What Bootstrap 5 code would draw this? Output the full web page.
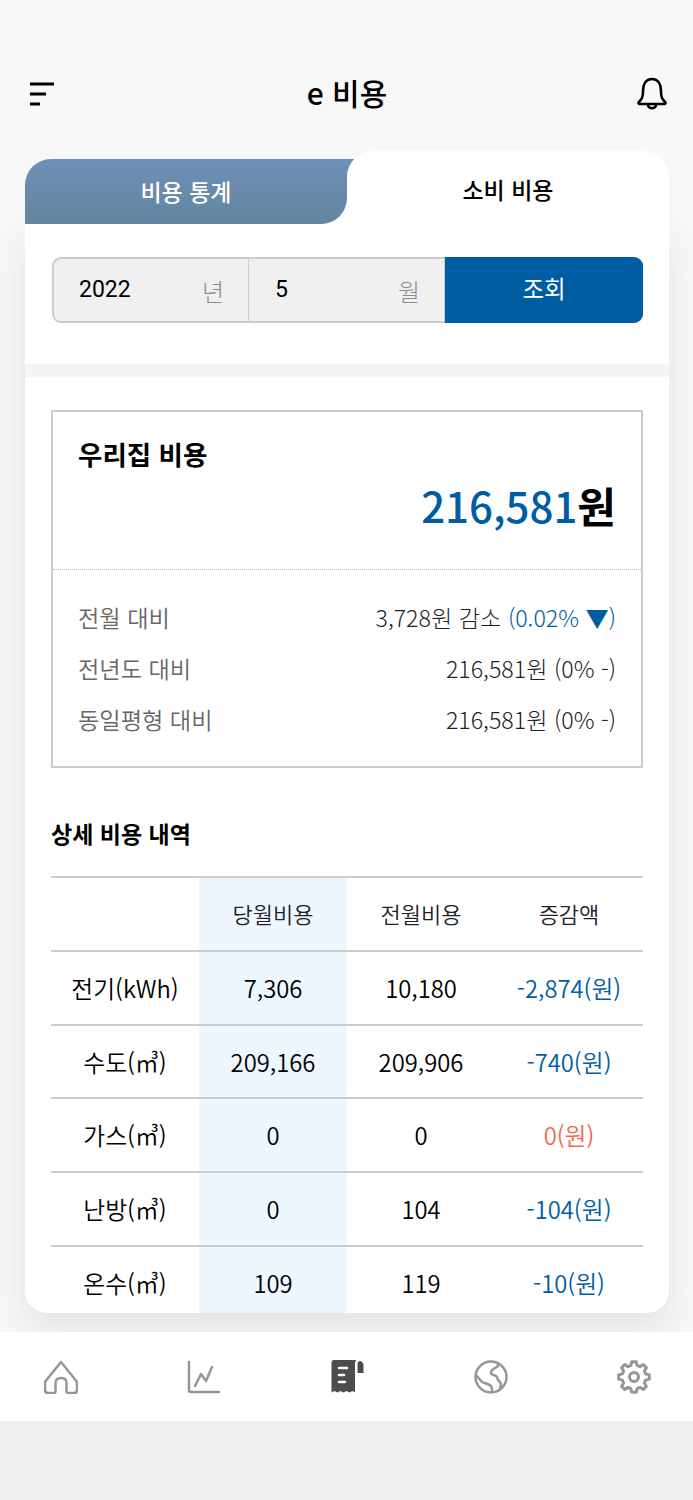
<!DOCTYPE html>
<html lang="ko">
<head>
    <meta charset="UTF-8">
    <meta name="viewport" content="width=device-width, initial-scale=1.0">
    <title>e 비용</title>

    <link href="https://cdn.jsdelivr.net/npm/bootstrap@5.3.0/dist/css/bootstrap.min.css" rel="stylesheet">

    <style>
        body {
            background: #f8f8f8;
            font-family: "Noto Sans CJK KR", sans-serif;
            color: #000;
            height: 1500px;
            overflow: hidden;
        }

        .top-bar { height: 151px; padding: 0 26px 0 30px; }
        .top-title { font-size: 30px; font-weight: 500; line-height: 1; margin: 32px 0 0 3px; }
        .top-bar svg { margin-top: 36px; }

        .cost-wrap { margin: 0 24px 0 25px; height: 1162px; }

        .tab-row { isolation: isolate; }
        .tab-slot { flex: 0 0 50%; }
        .tab-slot-off { padding-top: 8px; background: linear-gradient(transparent 50%, #fff 50%); }
        .tab-off {
            height: 65px;
            background: linear-gradient(#6e90b6, #64859f);
            color: #fff;
            font-size: 23px;
            font-weight: 500;
            border-radius: 26px 0 26px 0;
        }
        .tab-on {
            position: relative;
            height: 73px;
            background: #fff;
            font-size: 23px;
            font-weight: 500;
            border-radius: 26px 26px 0 0;
            padding-top: 3px;
        }
        .tab-on::before {
            content: "";
            position: absolute;
            left: 0;
            top: 8px;
            width: 26px;
            height: 26px;
            background: #6e90b6;
            z-index: -1;
        }

        .cost-body {
            height: 1089px;
            background: #fff;
            border-radius: 0 0 22px 22px;
            overflow: hidden;
            box-shadow: 0 18px 40px rgba(0, 0, 0, .09);
        }

        .search-area { padding: 33px 26px 0 27px; border-bottom: 13px solid #f5f5f5; box-sizing: content-box; height: 107px; }
        .search-box { height: 66px; border: 2px solid #ccc; border-radius: 9px; background: #f0f0f0; }
        .search-cell { flex: 0 0 195px; padding: 1px 24px 0 25px; border-right: 1px solid #ccc; font-family: Roboto, sans-serif; font-size: 23px; }
        .search-cell + .search-cell { flex-basis: 196px; padding-left: 26px; }
        .search-cell span:last-child { color: #8c8c8c; font-family: "Noto Sans CJK KR", sans-serif; font-size: 24px; font-weight: 300; }
        .search-btn {
            flex: 1;
            margin: -2px -2px -2px 0;
            background: #005ca3;
            color: #fff;
            border: 0;
            border-radius: 0 9px 9px 0;
            font-size: 23.5px;
            line-height: 1;
            padding: 0 0 3px;
        }
        .search-btn:hover { background: #005ca3; color: #fff; }

        .detail-area { padding: 33px 26px 0; }
        .sum-box { height: 358px; border: 2px solid #ccc; }
        .sum-head { height: 158px; padding: 23px 25px 0 25px; border-bottom: 1px dotted #bbb; }
        .sum-title { font-size: 26.5px; font-weight: 700; line-height: 38px; margin: 0; }
        .sum-total { font-size: 42px; font-weight: 700; line-height: 60px; margin-top: 2px; }
        .sum-total b { color: #005ca3; font-weight: 500; }
        .sum-rows { padding: 22px 25px 0 25px; }
        .sum-row { height: 51px; font-size: 23.2px; font-weight: 300; color: #222; }
        .sum-label { color: #666; font-weight: 350; }
        .txt-down { color: #005ca3; }

        .sub-title { font-size: 23px; font-weight: 700; line-height: 34px; margin: 48px 0 26px; }

        .cost-table { table-layout: fixed; margin: 0; border-top: 2px solid #ccc; }
        .cost-table th, .cost-table td {
            height: 73.75px;
            padding: 0;
            text-align: center;
            vertical-align: middle;
            font-size: 23.8px;
            font-weight: 350;
            border-bottom: 2px solid #ccc;
            color: #000;
        }
        .cost-table th { font-size: 22px; font-weight: 350; color: #222; }
        .cost-table .col-now { background: #eef7ff; }
        .cost-table .val-down { color: #005ca3; }
        .cost-table .val-zero { color: #f4664f; }

        .bottom-nav { height: 89px; margin-top: 19px; background: #fff; padding: 0 42px 0 44px; }
        .bottom-fill { height: 79px; background: #f0f0f0; }
    </style>
</head>
<body>

    <div class="top-bar d-flex justify-content-between align-items-center">
        <svg width="24" height="24" viewBox="0 0 24 24" fill="none" stroke="#000" stroke-width="3">
            <path d="M0 2h24M0 12h16M0 22h10"/>
        </svg>
        <div class="top-title">e 비용</div>
        <svg width="30" height="33" viewBox="0 0 30 33" fill="none" stroke="#000" stroke-width="2.600" stroke-linejoin="round">
            <path d="M2 25c3-3 4-5 4-11C6 7 9 2 15 2s9 5 9 12c0 6 1 8 4 11 1 1 .5 2-1 2H3c-1.500 0-2-1-1-2z"/>
            <path d="M11 27.500c0 5 8 5 8 0"/>
        </svg>
    </div>

    <div class="cost-wrap">
        <div class="tab-row d-flex align-items-start">
            <div class="tab-slot tab-slot-off">
                <div class="tab-off d-flex align-items-center justify-content-center">비용 통계</div>
            </div>
            <div class="tab-slot tab-on d-flex align-items-center justify-content-center">소비 비용</div>
        </div>

        <div class="cost-body">
            <div class="search-area">
                <div class="search-box d-flex align-items-stretch">
                    <div class="search-cell d-flex justify-content-between align-items-center"><span>2022</span><span>년</span></div>
                    <div class="search-cell d-flex justify-content-between align-items-center"><span>5</span><span>월</span></div>
                    <button type="button" class="btn search-btn">조회</button>
                </div>
            </div>

            <div class="detail-area">
                <div class="sum-box">
                    <div class="sum-head">
                        <h2 class="sum-title">우리집 비용</h2>
                        <div class="sum-total text-end"><b>216,581</b>원</div>
                    </div>
                    <div class="sum-rows">
                        <div class="sum-row d-flex justify-content-between align-items-center">
                            <span class="sum-label">전월 대비</span>
                            <span>3,728원 감소 <span class="txt-down">(0.02% ▼)</span></span>
                        </div>
                        <div class="sum-row d-flex justify-content-between align-items-center">
                            <span class="sum-label">전년도 대비</span>
                            <span>216,581원 (0% -)</span>
                        </div>
                        <div class="sum-row d-flex justify-content-between align-items-center">
                            <span class="sum-label">동일평형 대비</span>
                            <span>216,581원 (0% -)</span>
                        </div>
                    </div>
                </div>

                <h3 class="sub-title">상세 비용 내역</h3>

                <table class="table cost-table">
                    <thead>
                        <tr><th></th><th class="col-now">당월비용</th><th>전월비용</th><th>증감액</th></tr>
                    </thead>
                    <tbody>
                        <tr><td>전기(kWh)</td><td class="col-now">7,306</td><td>10,180</td><td class="val-down">-2,874(원)</td></tr>
                        <tr><td>수도(㎥)</td><td class="col-now">209,166</td><td>209,906</td><td class="val-down">-740(원)</td></tr>
                        <tr><td>가스(㎥)</td><td class="col-now">0</td><td>0</td><td class="val-zero">0(원)</td></tr>
                        <tr><td>난방(㎥)</td><td class="col-now">0</td><td>104</td><td class="val-down">-104(원)</td></tr>
                        <tr><td>온수(㎥)</td><td class="col-now">109</td><td>119</td><td class="val-down">-10(원)</td></tr>
                    </tbody>
                </table>
            </div>
        </div>
    </div>

    <nav class="bottom-nav d-flex justify-content-between align-items-center">
        <svg width="34" height="34" viewBox="0 0 34 34" fill="none" stroke="#969696" stroke-width="2.500" stroke-linejoin="round">
            <path d="M17 2L2.500 20c-1 1-1.500 2-1.500 3v7c0 2 1 3 3 3h6c1 0 1.500-.5 1.500-1.500V23c0-3 2-5 5.500-5s5.500 2 5.500 5v8.500c0 1 .5 1.500 1.500 1.500h6c2 0 3-1 3-3v-7c0-1-.5-2-1.500-3z"/>
        </svg>
        <svg width="34" height="34" viewBox="0 0 34 34" fill="none" stroke="#969696" stroke-width="2.500" stroke-linecap="round" stroke-linejoin="round">
            <path d="M2 2v28c0 1.500 .5 2 2 2h28"/>
            <path d="M8 26l6-12 5 7 6-14"/>
        </svg>
        <svg width="34" height="34" viewBox="1.500 0 34 34">
            <path fill="#4d4d4d" d="M4 0h23c-1 1-1.500 2-1.500 4v28.500l-2.500-1.500-3 1.500-3-1.500-3 1.500-3-1.500-3 1.500-3-1.500-3 1.500V3c0-2 1-3 2.500-3z"/>
            <path fill="#4d4d4d" d="M28 13V4c0-2 1-3 2.500-3S34 3 34 5v8z"/>
            <path stroke="#fff" stroke-width="2.500" stroke-linecap="round" d="M9.500 8h8M9.500 15h5M9.500 22h6"/>
        </svg>
        <svg width="34" height="34" viewBox="0 0 34 34" fill="none" stroke="#969696" stroke-width="2.500" stroke-linejoin="round">
            <circle cx="17" cy="17" r="15.500"/>
            <path d="M2 15l6 7c2 1 7 2 9 4 1 1 1 4 1 7"/>
            <path d="M24 3c1 2-1 4-3 5s-4 3-4 5 3 2 5 3 1 3 2 4 3 2 3 5c0 1-1 3-2 3"/>
        </svg>
        <svg width="34" height="34" viewBox="0 0 34 34" fill="none" stroke="#969696" stroke-width="3" stroke-linejoin="round">
            <path d="M13.900 5.400L14.840 1.650H19.160L20.100 5.400L23 6.600L26.330 4.620L29.380 7.670L27.400 11L28.600 13.900L32.350 14.840V19.160L28.600 20.100L27.400 23L29.380 26.330L26.330 29.380L23 27.400L20.100 28.600L19.160 32.350H14.840L13.900 28.600L11 27.400L7.670 29.380L4.620 26.330L6.600 23L5.400 20.100L1.650 19.160V14.840L5.400 13.900L6.600 11L4.620 7.670L7.670 4.620L11 6.600z"/>
            <circle cx="17" cy="17" r="4.500"/>
        </svg>
    </nav>
    <div class="bottom-fill"></div>

    <script src="https://cdn.jsdelivr.net/npm/bootstrap@5.3.0/dist/js/bootstrap.bundle.min.js"></script>
</body>
</html>
